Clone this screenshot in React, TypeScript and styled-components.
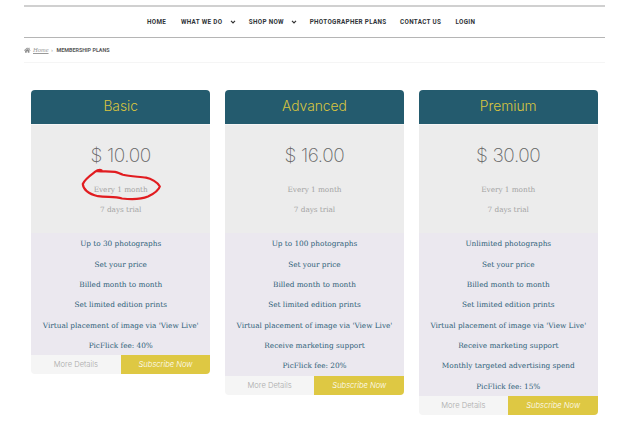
import styled, { createGlobalStyle } from "styled-components"
import { FaHome } from "react-icons/fa"

type Plan = {
  name: string
  price: string
  features: string[]
  circled?: boolean
}

const menu = [
  { label: "HOME", width: 20 },
  { label: "WHAT WE DO", width: 43, dropdown: true },
  { label: "SHOP NOW", width: 36, dropdown: true },
  { label: "PHOTOGRAPHER PLANS", width: 76.5 },
  { label: "CONTACT US", width: 41.5 },
  { label: "LOGIN", width: 21 },
]

const plans: Plan[] = [
  {
    name: "Basic",
    price: "$ 10.00",
    circled: true,
    features: [
      "Up to 30 photographs",
      "Set your price",
      "Billed month to month",
      "Set limited edition prints",
      "Virtual placement of image via 'View Live'",
      "PicFlick fee: 40%",
    ],
  },
  {
    name: "Advanced",
    price: "$ 16.00",
    features: [
      "Up to 100 photographs",
      "Set your price",
      "Billed month to month",
      "Set limited edition prints",
      "Virtual placement of image via 'View Live'",
      "Receive marketing support",
      "PicFlick fee: 20%",
    ],
  },
  {
    name: "Premium",
    price: "$ 30.00",
    features: [
      "Unlimited photographs",
      "Set your price",
      "Billed month to month",
      "Set limited edition prints",
      "Virtual placement of image via 'View Live'",
      "Receive marketing support",
      "Monthly targeted advertising spend",
      "PicFlick fee: 15%",
    ],
  },
]

export default function App() {
  return (
    <Page>
      <GlobalStyle />
      <Nav>
        {menu.map(({ label, width, dropdown }) => (
          <NavItem key={label}>
            <NavLabel $width={width}>{label}</NavLabel>
            {dropdown && (
              <Chevron viewBox="0 0 6 4">
                <path d="M1 0.8 3 2.8 5 0.8" />
              </Chevron>
            )}
          </NavItem>
        ))}
      </Nav>
      <Breadcrumb>
        <FaHome size={6.5} color="#8a8a8a" />
        <HomeLink>Home</HomeLink>
        <Separator>›</Separator>
        <Current>MEMBERSHIP PLANS</Current>
      </Breadcrumb>
      <Plans>
        {plans.map((plan) => (
          <PlanCard key={plan.name} {...plan} />
        ))}
      </Plans>
    </Page>
  )
}

function PlanCard({ name, price, features, circled }: Plan) {
  return (
    <Card>
      <CardHeader>{name}</CardHeader>
      <Pricing>
        <Price>{price}</Price>
        <Term>Every 1 month</Term>
        <Term>7 days trial</Term>
        {circled && (
          <Scribble viewBox="0 0 84 36">
            <path d="M21.5 3.2C19 2.4 17.5 3 14.5 5.2C10 8.5 4.5 12.5 2.8 17C3 22 8 27 18 29.2C27 30.5 35 29.2 42 31.5C52 32.6 62 32 68 29.6C73 27 79 22.5 79.8 19.4C78 15.5 71 11.5 66 10.7C60 9.7 50 9.5 43 7.8C40 7 38 5.4 35 4.8C29 4.2 24 4.6 17.5 4.2" />
          </Scribble>
        )}
      </Pricing>
      <Features>
        {features.map((feature) => (
          <Feature key={feature}>{feature}</Feature>
        ))}
      </Features>
      <Actions>
        <Details>More Details</Details>
        <Subscribe>Subscribe Now</Subscribe>
      </Actions>
    </Card>
  )
}

const GlobalStyle = createGlobalStyle`
  * {
    box-sizing: border-box;
  }

  body {
    margin: 0;
    background: #fff;
  }
`

const Page = styled.div`
  width: 640px;
  height: 434px;
  padding: 5px 35px 0 24px;
  overflow: hidden;
`

const Nav = styled.nav`
  display: flex;
  align-items: center;
  gap: 13.9px;
  height: 33px;
  padding-left: 123px;
  border-top: 2px solid #d0d0d0;
  border-bottom: 1px solid #b5b5b5;
`

const NavItem = styled.div`
  display: flex;
  align-items: center;
  gap: 6px;
`

const NavLabel = styled.a<{ $width: number }>`
  width: ${({ $width }) => $width}px;
  font: 700 6.3px/10px Roboto, sans-serif;
  letter-spacing: 0.32px;
  color: #303438;
  white-space: nowrap;
`

const Chevron = styled.svg`
  flex: none;
  width: 6px;
  height: 4px;
  margin-right: -1px;
  fill: none;
  stroke: #333;
  stroke-width: 1.2;
`

const Breadcrumb = styled.div`
  display: flex;
  align-items: center;
  height: 25px;
  border-bottom: 1px solid #f5f5f5;
`

const HomeLink = styled.a`
  width: 18px;
  margin-left: 2.5px;
  font: italic 6.5px/10px "Liberation Serif", serif;
  text-decoration: underline;
  color: #999;
`

const Separator = styled.span`
  width: 5.5px;
  font: 6px/10px "Liberation Sans", sans-serif;
  color: #aaa;
`

const Current = styled.span`
  font: 700 5.4px/10px Roboto, sans-serif;
  color: #5a5a5a;
`

const Plans = styled.main`
  display: grid;
  grid-template-columns: repeat(3, 179.4px);
  align-items: start;
  gap: 14.4px;
  padding: 26.6px 0 0 7px;
`

const Card = styled.section`
  border-radius: 4px;
  overflow: hidden;
  text-align: center;
`

const CardHeader = styled.h2`
  height: 34.4px;
  margin: 0;
  font: 300 13.8px/33.6px Inter, sans-serif;
  color: #d8c53f;
  background: #245b6e;
`

const Pricing = styled.div`
  position: relative;
  height: 109.5px;
  padding-top: 18px;
  background: #ececec;
  border-top: 1px solid #f5f5f5;
`

const Price = styled.div`
  height: 37px;
  font: 200 19px/25px Inter, sans-serif;
  letter-spacing: -0.4px;
  color: #666;
`

const Term = styled.div`
  font: 7.35px/19.6px "DejaVu Serif", serif;
  letter-spacing: -0.05px;
  color: #a3a3a3;
`

const Scribble = styled.svg`
  position: absolute;
  left: 49px;
  top: 42px;
  width: 84px;
  height: 36px;
  fill: none;
  stroke: #e11c20;
  stroke-width: 2.2;
  stroke-linecap: round;
  stroke-linejoin: round;
`

const Features = styled.ul`
  margin: 0;
  padding: 0;
  list-style: none;
  background: #ebe8ef;
`

const Feature = styled.li`
  height: 20.33px;
  font: 7.35px/21.8px "DejaVu Serif", serif;
  letter-spacing: -0.03px;
  color: #2d6078;
`

const Actions = styled.div`
  display: grid;
  grid-template-columns: 1fr 1fr;
`

const Action = styled.a`
  font: 300 7.6px/19px Inter, sans-serif;
`

const Details = styled(Action)`
  color: #aaa;
  background: #f5f5f5;
`

const Subscribe = styled(Action)`
  font-style: italic;
  color: #fff;
  background: #dec843;
`
